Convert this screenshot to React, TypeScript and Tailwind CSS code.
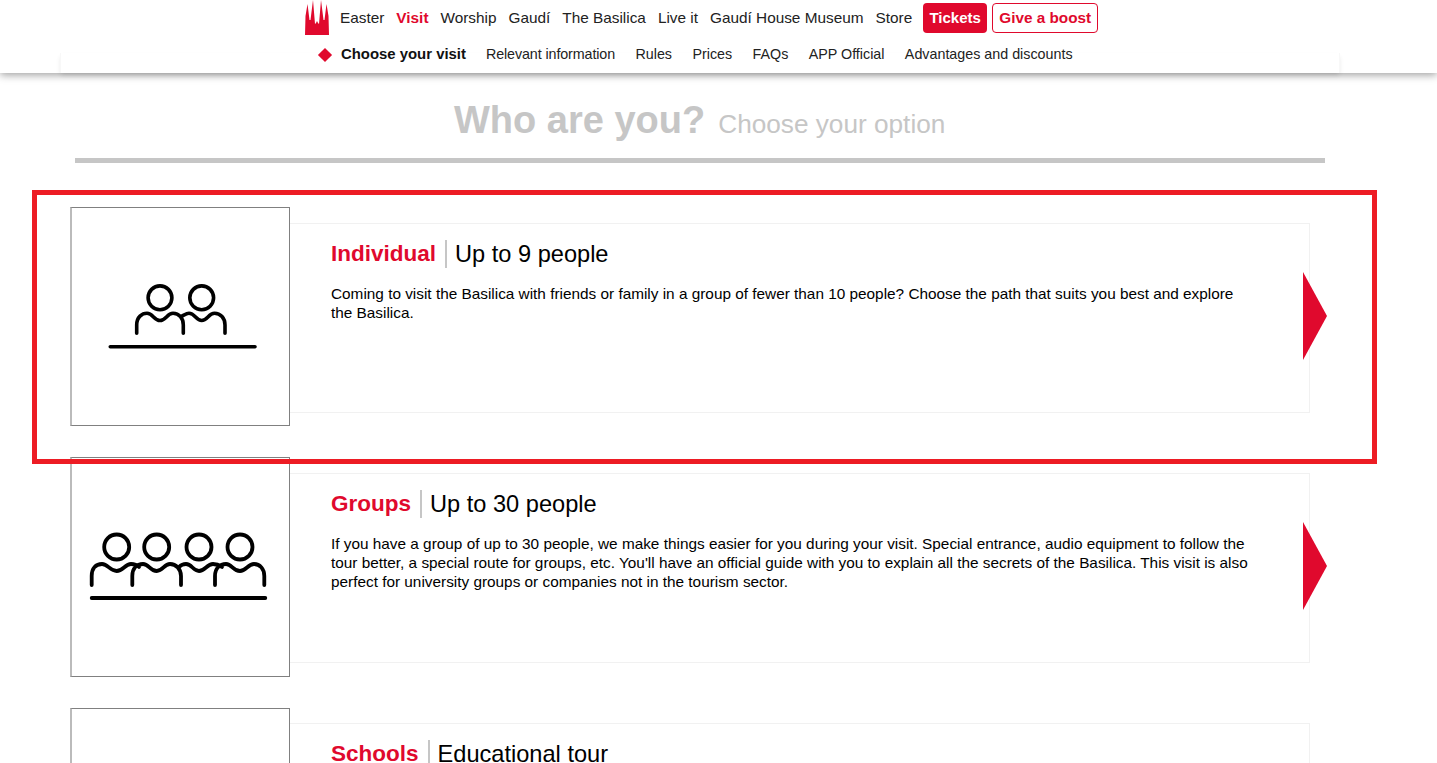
const mainNav = [
  { label: 'Easter', className: 'text-[#222]' },
  { label: 'Visit', className: 'font-bold text-[#e0092d]' },
  { label: 'Worship', className: 'text-[#222]' },
  { label: 'Gaudí', className: 'text-[#222]' },
  { label: 'The Basilica', className: 'text-[#222]' },
  { label: 'Live it', className: 'text-[#222]' },
  { label: 'Gaudí House Museum', className: 'text-[#222]' },
  { label: 'Store', className: 'text-[#222]' },
];

const subNav = [
  { label: 'Relevant information', className: 'tracking-[-0.1px]' },
  { label: 'Rules', className: '' },
  { label: 'Prices', className: '' },
  { label: 'FAQs', className: '' },
  { label: 'APP Official', className: '' },
  { label: 'Advantages and discounts', className: '' },
];

const Logo = () => (
  <svg width="24" height="35" viewBox="0 0 24 35" className="shrink-0">
    <path
      fill="#e0092d"
      d="M0 35L0.5 16 2.5 4 4.5 20H5.5L8 0 10 24 11 23 12 21 13 23 14 24 16 0 18.5 20H19.5L21.5 4 23.5 16 24 35Z"
    />
  </svg>
);

const Header = () => (
  <header className="relative z-10 h-[73px] bg-white shadow-[0_2px_8px_rgba(0,0,0,0.38)]">
    <div className="absolute bottom-0 left-[60px] h-[20px] w-[1280px] border-x border-[#f8f8f8] shadow-[0_3px_5px_-1px_rgba(0,0,0,0.12)]" />
    <div className="relative flex h-[36px] items-start pl-[305px]">
      <Logo />
      <nav className="ml-[11px] flex h-[36px] items-center gap-[12px] text-[15.35px]">
        {mainNav.map((item) => (
          <a key={item.label} className={item.className}>
            {item.label}
          </a>
        ))}
      </nav>
      <a className="ml-[11px] mt-[3px] flex h-[30px] w-[64px] items-center justify-center rounded-[4px] bg-[#e0092d] text-[15px] font-bold text-white">
        Tickets
      </a>
      <a className="ml-[5px] mt-[3px] flex h-[30px] w-[106px] items-center justify-center rounded-[4px] border border-[#e0092d] text-[15.3px] font-bold text-[#e0092d]">
        Give a boost
      </a>
    </div>
    <div className="relative flex h-[36px] items-center pl-[320px] pt-[1px] text-[14.3px] text-[#222]">
      <span className="h-[10px] w-[10px] rotate-45 bg-[#e0092d]" />
      <a className="ml-[11px] text-[14.9px] font-bold text-[#111]">Choose your visit</a>
      <nav className="ml-[20px] flex gap-[20.4px]">
        {subNav.map((item) => (
          <a key={item.label} className={item.className}>
            {item.label}
          </a>
        ))}
      </nav>
    </div>
  </header>
);

const TwoPeople = () => (
  <svg width="219" height="219" viewBox="1 1 219 219" fill="none" stroke="#000" strokeWidth="3.6" strokeLinecap="round">
    <circle cx="89" cy="90.8" r="11.9" />
    <circle cx="130.7" cy="90.8" r="11.9" />
    <path d="M65.7 126.3V118C65.7 110 71 106.3 76 106.3C82 106.3 83 113.5 89 113.5C95 113.5 96 106.3 102 106.3C108 106.3 112.3 111 112.3 118V126.3" />
    <path d="M111 109C114 107.5 116 106.3 118 106.3C124 106.3 125 113.5 130.7 113.5C136.5 113.5 137.5 106.3 143.5 106.3C149.5 106.3 154 111 154 118V126.3" />
    <path d="M39.3 139.7H184" />
  </svg>
);

const FourPeople = () => (
  <svg width="219" height="219" viewBox="1 1 219 219" fill="none" stroke="#000" strokeWidth="3.8" strokeLinecap="round">
    <circle cx="45.7" cy="90" r="12.5" />
    <circle cx="85.7" cy="90" r="12.5" />
    <circle cx="128" cy="90" r="12.5" />
    <circle cx="169" cy="90" r="12.5" />
    <path d="M20.7 128V119C20.7 111 25 107 31 107C37 107 39 114 45.7 114C52 114 54 107 60 107C63 107 66 108 68 110" />
    <path d="M61.3 128V119C61.3 111 66 107 72 107C78 107 79 114 85.7 114C92 114 93 107 99 107C105 107 110 112 110 119V128" />
    <path d="M108 110C110 108 112 107 115 107C121 107 122 114 128 114C134 114 136 107 142 107C145 107 148 108 151 110" />
    <path d="M144 128V119C144 111 149 107 155 107C161 107 162 114 169 114C175 114 177 107 183 107C189 107 193.3 112 193.3 119V128" />
    <path d="M20.7 141H194.3" />
  </svg>
);

const options = [
  {
    title: 'Individual',
    sub: 'Up to 9 people',
    text: 'Coming to visit the Basilica with friends or family in a group of fewer than 10 people? Choose the path that suits you best and explore the Basilica.',
    icon: <TwoPeople />,
    boxClass: 'h-[219px]',
  },
  {
    title: 'Groups',
    sub: 'Up to 30 people',
    text: "If you have a group of up to 30 people, we make things easier for you during your visit. Special entrance, audio equipment to follow the tour better, a special route for groups, etc. You'll have an official guide with you to explain all the secrets of the Basilica. This visit is also perfect for university groups or companies not in the tourism sector.",
    icon: <FourPeople />,
    boxClass: 'h-[220px]',
  },
  {
    title: 'Schools',
    sub: 'Educational tour',
    text: '',
    icon: null,
    boxClass: 'mt-[1px] h-[219px]',
  },
];

type OptionProps = (typeof options)[number];

const OptionRow = ({ title, sub, text, icon, boxClass }: OptionProps) => (
  <div className="flex h-[250px] items-start pl-[70px]">
    <div className={`w-[220px] shrink-0 overflow-hidden border border-l-2 border-[#808080] border-l-[#bbb] bg-white ${boxClass}`}>
      {icon}
    </div>
    <div className="relative mt-[16px] h-[190px] w-[1020px] border border-l-0 border-[#f1f1f1] pl-[41px] pt-[15px]">
      <div className="flex h-[30px] items-center leading-[30px]">
        <h2 className="text-[22.5px] font-bold text-[#e0092d]">{title}</h2>
        <span className="ml-[9px] mr-[8px] h-[28px] w-[2px] bg-[#c6c6c6]" />
        <span className="text-[23.6px] text-black">{sub}</span>
      </div>
      <p className="mt-[15px] w-[920px] text-[15.35px] leading-[19px] text-black">{text}</p>
      <svg width="24" height="88" viewBox="0 0 24 88" className="absolute -right-[18px] top-[48px]">
        <path d="M0 0L24 44L0 88Z" fill="#e0092d" />
      </svg>
    </div>
  </div>
);

export default function App() {
  return (
    <div className="relative h-screen overflow-hidden bg-white font-['Liberation_Sans',Arial,sans-serif]">
      <Header />
      <div className="mt-[25px] flex h-[44px] items-baseline pl-[454px]">
        <h1 className="text-[38px] font-bold leading-[44px] text-[#c6c6c6]">Who are you?</h1>
        <span className="ml-[13px] text-[26.2px] text-[#c6c6c6]">Choose your option</span>
      </div>
      <div className="ml-[75px] mt-[16px] h-[5px] w-[1250px] bg-[#c6c6c6]" />
      <div className="mt-[44px]">
        {options.map((option) => (
          <OptionRow key={option.title} {...option} />
        ))}
      </div>
      <div className="pointer-events-none absolute left-[32px] top-[190px] h-[274px] w-[1345px] border-[5px] border-[#ed1c24]" />
    </div>
  );
}
